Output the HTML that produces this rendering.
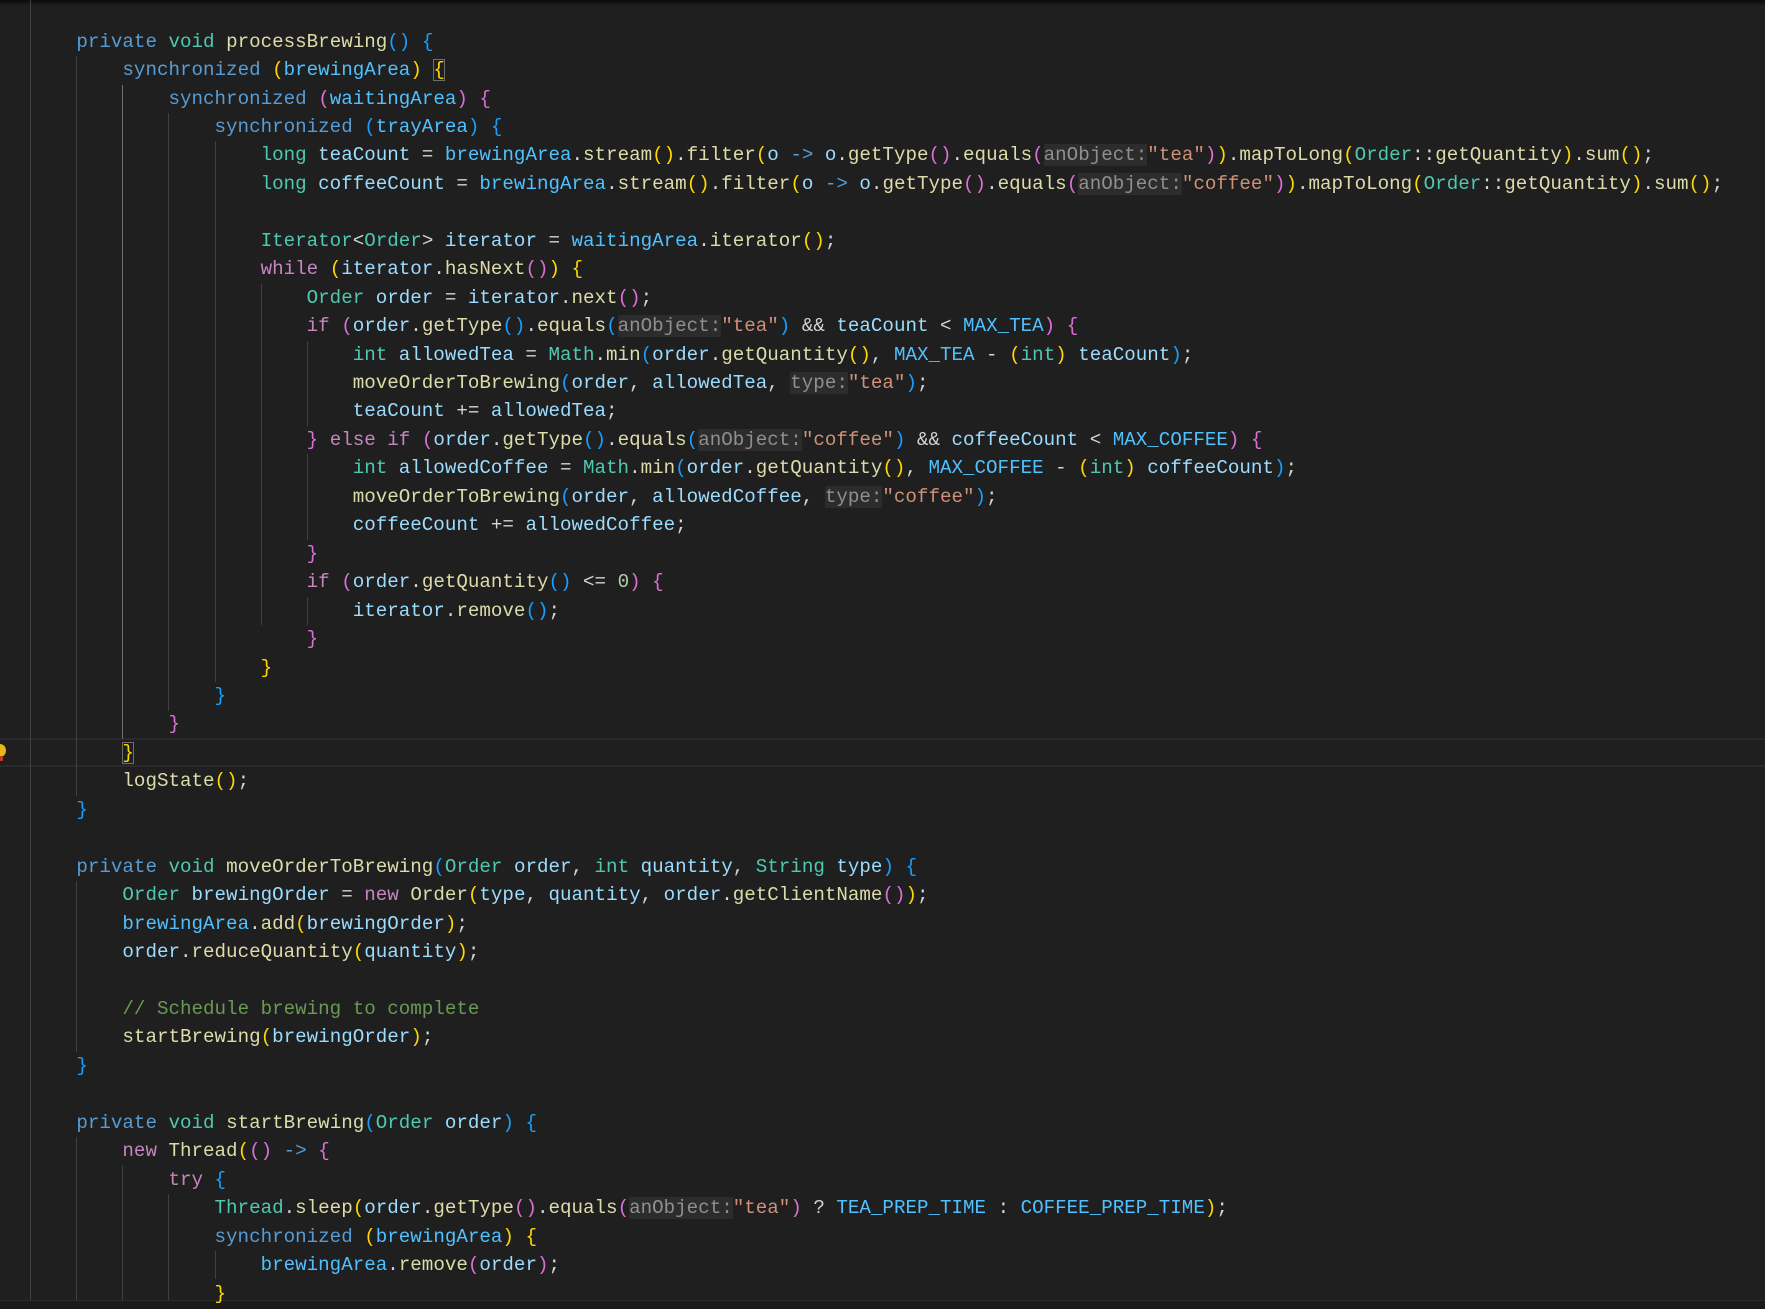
<!DOCTYPE html>
<html><head><meta charset="utf-8"><style>
html,body{margin:0;padding:0;background:#1f1f1f;width:1765px;height:1309px;overflow:hidden;position:relative}
.g{position:absolute;width:1px;background:#404040}
.ga{background:#707070}
pre{position:absolute;left:30.3px;top:27.6px;margin:0;font-family:"Liberation Mono",monospace;font-size:19.2px;line-height:28.45px;color:#d4d4d4;white-space:pre}
.k{color:#569cd6}.t{color:#4ec9b0}.c{color:#c586c0}.f{color:#dcdcaa}.v{color:#9cdcfe}.fd{color:#4fc1ff}
.s{color:#ce9178}.cm{color:#6a9955}.n{color:#b5cea8}.h{color:#8f8f8f;background:#2c2c2c}
.b1{color:#ffd700}.b2{color:#da70d6}.b3{color:#179fff}
.box{outline:1px solid #6e6e6e;outline-offset:-1px}
</style></head><body>
<div style="position:absolute;left:0;top:0;width:1765px;height:6px;background:linear-gradient(#0a0a0a,#1f1f1f)"></div>
<div style="position:absolute;left:0;top:738px;width:1765px;height:25px;border-top:2px solid #2a2a2a;border-bottom:2px solid #2a2a2a"></div>
<div style="position:absolute;left:-6px;top:744px;width:12px;height:13px;border-radius:50%;background:#e8b719"></div>
<div style="position:absolute;left:-2px;top:756px;width:5px;height:5px;background:#c0392b"></div>
<div style="position:absolute;left:0;top:1300px;width:1765px;height:9px;background:#1a1a1a;border-top:1px solid #2b2b2b"></div>
<div class="g" style="left:30px;top:0;height:1300px"></div>
<div class="g" style="left:76px;top:56px;height:739.7px"></div>
<div class="g ga" style="left:122px;top:84.5px;height:654.4px"></div>
<div class="g" style="left:168px;top:113px;height:597.5px"></div>
<div class="g" style="left:215px;top:141.4px;height:540.6px"></div>
<div class="g" style="left:261px;top:283.6px;height:341.4px"></div>
<div class="g" style="left:307px;top:340.5px;height:85.4px"></div>
<div class="g" style="left:307px;top:454.3px;height:85.4px"></div>
<div class="g" style="left:307px;top:596.6px;height:28.45px"></div>
<div class="g" style="left:76px;top:880.9px;height:170.7px"></div>
<div class="g" style="left:76px;top:1137px;height:163px"></div>
<div class="g" style="left:122px;top:1165.4px;height:135px"></div>
<div class="g" style="left:168px;top:1193.9px;height:106px"></div>
<div class="g" style="left:215px;top:1250.8px;height:28.45px"></div>
<pre>    <span class="k">private</span> <span class="t">void</span> <span class="f">processBrewing</span><span class="b3">()</span> <span class="b3">{</span>
        <span class="k">synchronized</span> <span class="b1">(</span><span class="fd">brewingArea</span><span class="b1">)</span> <span class="b1 box">{</span>
            <span class="k">synchronized</span> <span class="b2">(</span><span class="fd">waitingArea</span><span class="b2">)</span> <span class="b2">{</span>
                <span class="k">synchronized</span> <span class="b3">(</span><span class="fd">trayArea</span><span class="b3">)</span> <span class="b3">{</span>
                    <span class="t">long</span> <span class="v">teaCount</span> = <span class="fd">brewingArea</span>.<span class="f">stream</span><span class="b1">()</span>.<span class="f">filter</span><span class="b1">(</span><span class="v">o</span> <span class="k">-&gt;</span> <span class="v">o</span>.<span class="f">getType</span><span class="b2">()</span>.<span class="f">equals</span><span class="b2">(</span><span class="h">anObject:</span><span class="s">"tea"</span><span class="b2">)</span><span class="b1">)</span>.<span class="f">mapToLong</span><span class="b1">(</span><span class="t">Order</span>::<span class="f">getQuantity</span><span class="b1">)</span>.<span class="f">sum</span><span class="b1">()</span>;
                    <span class="t">long</span> <span class="v">coffeeCount</span> = <span class="fd">brewingArea</span>.<span class="f">stream</span><span class="b1">()</span>.<span class="f">filter</span><span class="b1">(</span><span class="v">o</span> <span class="k">-&gt;</span> <span class="v">o</span>.<span class="f">getType</span><span class="b2">()</span>.<span class="f">equals</span><span class="b2">(</span><span class="h">anObject:</span><span class="s">"coffee"</span><span class="b2">)</span><span class="b1">)</span>.<span class="f">mapToLong</span><span class="b1">(</span><span class="t">Order</span>::<span class="f">getQuantity</span><span class="b1">)</span>.<span class="f">sum</span><span class="b1">()</span>;

                    <span class="t">Iterator</span>&lt;<span class="t">Order</span>&gt; <span class="v">iterator</span> = <span class="fd">waitingArea</span>.<span class="f">iterator</span><span class="b1">()</span>;
                    <span class="c">while</span> <span class="b1">(</span><span class="v">iterator</span>.<span class="f">hasNext</span><span class="b2">()</span><span class="b1">)</span> <span class="b1">{</span>
                        <span class="t">Order</span> <span class="v">order</span> = <span class="v">iterator</span>.<span class="f">next</span><span class="b2">()</span>;
                        <span class="c">if</span> <span class="b2">(</span><span class="v">order</span>.<span class="f">getType</span><span class="b3">()</span>.<span class="f">equals</span><span class="b3">(</span><span class="h">anObject:</span><span class="s">"tea"</span><span class="b3">)</span> &amp;&amp; <span class="v">teaCount</span> &lt; <span class="fd">MAX_TEA</span><span class="b2">)</span> <span class="b2">{</span>
                            <span class="t">int</span> <span class="v">allowedTea</span> = <span class="t">Math</span>.<span class="f">min</span><span class="b3">(</span><span class="v">order</span>.<span class="f">getQuantity</span><span class="b1">()</span>, <span class="fd">MAX_TEA</span> - <span class="b1">(</span><span class="t">int</span><span class="b1">)</span> <span class="v">teaCount</span><span class="b3">)</span>;
                            <span class="f">moveOrderToBrewing</span><span class="b3">(</span><span class="v">order</span>, <span class="v">allowedTea</span>, <span class="h">type:</span><span class="s">"tea"</span><span class="b3">)</span>;
                            <span class="v">teaCount</span> += <span class="v">allowedTea</span>;
                        <span class="b2">}</span> <span class="c">else</span> <span class="c">if</span> <span class="b2">(</span><span class="v">order</span>.<span class="f">getType</span><span class="b3">()</span>.<span class="f">equals</span><span class="b3">(</span><span class="h">anObject:</span><span class="s">"coffee"</span><span class="b3">)</span> &amp;&amp; <span class="v">coffeeCount</span> &lt; <span class="fd">MAX_COFFEE</span><span class="b2">)</span> <span class="b2">{</span>
                            <span class="t">int</span> <span class="v">allowedCoffee</span> = <span class="t">Math</span>.<span class="f">min</span><span class="b3">(</span><span class="v">order</span>.<span class="f">getQuantity</span><span class="b1">()</span>, <span class="fd">MAX_COFFEE</span> - <span class="b1">(</span><span class="t">int</span><span class="b1">)</span> <span class="v">coffeeCount</span><span class="b3">)</span>;
                            <span class="f">moveOrderToBrewing</span><span class="b3">(</span><span class="v">order</span>, <span class="v">allowedCoffee</span>, <span class="h">type:</span><span class="s">"coffee"</span><span class="b3">)</span>;
                            <span class="v">coffeeCount</span> += <span class="v">allowedCoffee</span>;
                        <span class="b2">}</span>
                        <span class="c">if</span> <span class="b2">(</span><span class="v">order</span>.<span class="f">getQuantity</span><span class="b3">()</span> &lt;= <span class="n">0</span><span class="b2">)</span> <span class="b2">{</span>
                            <span class="v">iterator</span>.<span class="f">remove</span><span class="b3">()</span>;
                        <span class="b2">}</span>
                    <span class="b1">}</span>
                <span class="b3">}</span>
            <span class="b2">}</span>
        <span class="b1 box">}</span>
        <span class="f">logState</span><span class="b1">()</span>;
    <span class="b3">}</span>

    <span class="k">private</span> <span class="t">void</span> <span class="f">moveOrderToBrewing</span><span class="b3">(</span><span class="t">Order</span> <span class="v">order</span>, <span class="t">int</span> <span class="v">quantity</span>, <span class="t">String</span> <span class="v">type</span><span class="b3">)</span> <span class="b3">{</span>
        <span class="t">Order</span> <span class="v">brewingOrder</span> = <span class="c">new</span> <span class="f">Order</span><span class="b1">(</span><span class="v">type</span>, <span class="v">quantity</span>, <span class="v">order</span>.<span class="f">getClientName</span><span class="b2">()</span><span class="b1">)</span>;
        <span class="fd">brewingArea</span>.<span class="f">add</span><span class="b1">(</span><span class="v">brewingOrder</span><span class="b1">)</span>;
        <span class="v">order</span>.<span class="f">reduceQuantity</span><span class="b1">(</span><span class="v">quantity</span><span class="b1">)</span>;

        <span class="cm">// Schedule brewing to complete</span>
        <span class="f">startBrewing</span><span class="b1">(</span><span class="v">brewingOrder</span><span class="b1">)</span>;
    <span class="b3">}</span>

    <span class="k">private</span> <span class="t">void</span> <span class="f">startBrewing</span><span class="b3">(</span><span class="t">Order</span> <span class="v">order</span><span class="b3">)</span> <span class="b3">{</span>
        <span class="c">new</span> <span class="f">Thread</span><span class="b1">(</span><span class="b2">()</span> <span class="k">-&gt;</span> <span class="b2">{</span>
            <span class="c">try</span> <span class="b3">{</span>
                <span class="t">Thread</span>.<span class="f">sleep</span><span class="b1">(</span><span class="v">order</span>.<span class="f">getType</span><span class="b2">()</span>.<span class="f">equals</span><span class="b2">(</span><span class="h">anObject:</span><span class="s">"tea"</span><span class="b2">)</span> ? <span class="fd">TEA_PREP_TIME</span> : <span class="fd">COFFEE_PREP_TIME</span><span class="b1">)</span>;
                <span class="k">synchronized</span> <span class="b1">(</span><span class="fd">brewingArea</span><span class="b1">)</span> <span class="b1">{</span>
                    <span class="fd">brewingArea</span>.<span class="f">remove</span><span class="b2">(</span><span class="v">order</span><span class="b2">)</span>;
                <span class="b1">}</span></pre>
</body></html>
